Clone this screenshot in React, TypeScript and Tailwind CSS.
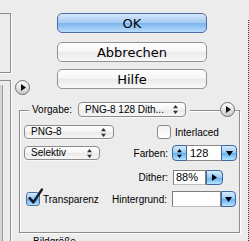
import React from 'react';

// 팝업 화살표 (위/아래)
const UpDown = ({ color = '#333' }: { color?: string }) => (
  <svg width="5" height="9" viewBox="0 0 5 9">
    <path d="M2.5 0L5 3.2H0z M0 5.8h5L2.5 9z" fill={color} />
  </svg>
);

const Popup = ({ label, className }: { label: string; className: string }) => (
  <div
    className={`flex items-center justify-between rounded-[4px] border border-[#8c8c8c] bg-[linear-gradient(#ffffff,#f4f4f4_50%,#e9e9e9_51%,#f7f7f7)] pl-[6px] pr-[7px] text-[10px] leading-none text-black shadow-[0_1px_0_#f8f8f8] ${className}`}
  >
    <span className="whitespace-nowrap">{label}</span>
    <UpDown />
  </div>
);

const blue =
  'border border-[#40689f] bg-[linear-gradient(#d6ecfd,#94cbf5_50%,#5fb0ee_51%,#b8e3ff)]';

const Circle = ({ className = '' }: { className?: string }) => (
  <div
    className={`flex h-[15px] w-[15px] shrink-0 items-center justify-center rounded-full border border-[#6f6f6f] bg-[linear-gradient(#ffffff,#e2e2e2_55%,#c9c9c9)] ${className}`}
  >
    <svg width="5" height="7" viewBox="0 0 5 7" className="ml-[1px]">
      <path d="M0 0L5 3.5L0 7z" fill="#111" />
    </svg>
  </div>
);

const Button = ({ label, primary = false, className = '' }: { label: string; primary?: boolean; className?: string }) => (
  <div
    className={`flex h-[20px] w-[150px] shrink-0 items-center justify-center rounded-[5px] text-[13px] leading-none text-black font-['DejaVu_Sans',sans-serif] ${
      primary
        ? 'border border-[#4a6ea8] bg-[linear-gradient(#d4e6fb,#a5cbf4_50%,#7db4ef_51%,#b9dcfb)]'
        : 'border border-[#929292] bg-[linear-gradient(#ffffff,#f5f5f5_50%,#e9e9e9_51%,#f9f9f9)]'
    } ${className}`}
  >
    {label}
  </div>
);

export default function App() {
  return (
    <div className="flex h-[241px] w-[249px] overflow-hidden bg-[#ececec] font-['Liberation_Sans',Arial,sans-serif] text-black">
      {/* 왼쪽 패널 조각 */}
      <div className="flex w-[12px] shrink-0 flex-col">
        <div className="mt-[13px] h-[60px] w-[11px] shrink-0 border-y border-r border-[#8d8d8d] shadow-[1px_1px_0_#ffffff]" />
        <div className="mt-[7px] flex w-[11px] flex-1 border-t border-r border-[#8d8d8d] shadow-[1px_0_0_#ffffff]">
          <div className="mt-[4px] w-[3px] border-r border-[#9a9a9a] bg-[#d6d6d6]" />
        </div>
      </div>

      {/* 메인 */}
      <div className="w-[236px] shrink-0 pt-[13px]">
        <Button label="OK" primary className="ml-[45px]" />
        <Button label="Abbrechen" className="ml-[45px] mt-[9px]" />
        <div className="mt-[7px] flex items-start">
          <Circle className="ml-[3px] mt-[11px] -mb-[6px]" />
          <Button label="Hilfe" className="ml-[27px]" />
        </div>

        {/* 설정 그룹 */}
        <div className="ml-[7px] mt-[21px] flex h-[123px] w-[221px] flex-col border border-[#8e8e8e] shadow-[inset_1px_1px_0_#ffffff,1px_1px_0_#ffffff]">
          {/* Vorgabe */}
          <div className="-mt-[9px] flex h-[15px] shrink-0 items-center">
            <div className="ml-[9px] flex h-full items-center bg-[#ececec] pl-[3px] pr-[4px]">
              <span className="w-[41px] whitespace-nowrap text-[10px]">Vorgabe:</span>
              <Popup label="PNG-8 128 Dith..." className="ml-[5px] h-[15px] w-[108px]" />
            </div>
            <div className="ml-auto mr-[4px] bg-[#ececec]">
              <Circle />
            </div>
          </div>

          {/* PNG-8 / Interlaced */}
          <div className="mt-[8px] flex h-[14px] shrink-0 items-center">
            <div className="flex w-[112px] shrink-0">
              <Popup label="PNG-8" className="ml-[4px] h-[14px] w-[90px]" />
            </div>
            <div className="ml-[25px] h-[14px] w-[14px] rounded-[3px] border border-[#8a8a8a] bg-[linear-gradient(#f2f2f2,#ffffff)]" />
            <span className="ml-[4px] text-[10px]">Interlaced</span>
          </div>

          {/* Selektiv / Farben */}
          <div className="mt-[6px] flex h-[16px] shrink-0 items-center">
            <div className="flex w-[112px] shrink-0">
              <Popup label="Selektiv" className="ml-[4px] h-[14px] w-[76px]" />
            </div>
            <div className="flex w-[36px] shrink-0 justify-end">
              <span className="whitespace-nowrap text-[10px]">Farben:</span>
            </div>
            <div className="ml-[4px] flex h-[16px]">
              <div className={`flex w-[15px] items-center justify-center rounded-l-[4px] ${blue}`}>
                <UpDown color="#000" />
              </div>
              <div className="flex w-[34px] items-center border-y border-[#8a8a8a] bg-white pl-[3px] text-[11px]">128</div>
              <div className={`flex w-[16px] items-center justify-center rounded-r-[4px] ${blue}`}>
                <svg width="7" height="5" viewBox="0 0 7 5">
                  <path d="M0 0h7L3.5 5z" fill="#000" />
                </svg>
              </div>
            </div>
          </div>

          {/* Dither */}
          <div className="mt-[9px] flex h-[15px] shrink-0 items-center">
            <div className="w-[112px] shrink-0" />
            <div className="flex w-[36px] shrink-0 justify-end">
              <span className="whitespace-nowrap text-[10px]">Dither:</span>
            </div>
            <div className="ml-[5px] flex h-[15px]">
              <div className="flex w-[33px] items-center border border-[#7e7e7e] border-b-[#bdbdbd] bg-white pl-[2px] text-[11px]">88%</div>
              <div className={`flex w-[17px] items-center justify-center rounded-r-[4px] ${blue}`}>
                <svg width="5" height="7" viewBox="0 0 5 7">
                  <path d="M0 0L5 3.5L0 7z" fill="#000" />
                </svg>
              </div>
            </div>
          </div>

          {/* Transparenz / Hintergrund */}
          <div className="mt-[6px] flex h-[16px] shrink-0 items-center">
            <div className="flex w-[112px] shrink-0 items-center">
              <div className="relative ml-[6px] h-[14px] w-[14px] rounded-[3px] border border-[#4b74a8] bg-[linear-gradient(#d3e9fd,#8ec6f3_50%,#68b2ec_51%,#b3dcfb)]">
                <svg width="17" height="17" viewBox="0 0 16 16" className="absolute -top-[5px] left-[0px]">
                  <path d="M2.5 9.5L6 13.5L14 1.5" fill="none" stroke="#1a1a2a" strokeWidth="2.4" strokeLinecap="round" strokeLinejoin="round" />
                </svg>
              </div>
              <span className="ml-[3px] text-[10px]">Transparenz</span>
            </div>
            <div className="flex w-[35px] shrink-0 justify-end">
              <span className="whitespace-nowrap text-[10px]">Hintergrund:</span>
            </div>
            <div className="ml-[5px] flex h-[16px]">
              <div className="w-[49px] border border-[#7e7e7e] border-b-[#bdbdbd] bg-white" />
              <div className={`flex w-[15px] items-center justify-center rounded-r-[4px] ${blue}`}>
                <svg width="7" height="5" viewBox="0 0 7 5">
                  <path d="M0 0h7L3.5 5z" fill="#000" />
                </svg>
              </div>
            </div>
          </div>
        </div>

        <span className="ml-[21px] mt-[4px] block text-[10px] leading-[10px]">Bildgröße</span>
      </div>

      {/* 오른쪽 경계선 */}
      <div className="mt-[20px] w-[1px] border-l border-dotted border-[#333] before:block before:h-[1px] before:bg-[#d97a2b]" />
    </div>
  );
}
